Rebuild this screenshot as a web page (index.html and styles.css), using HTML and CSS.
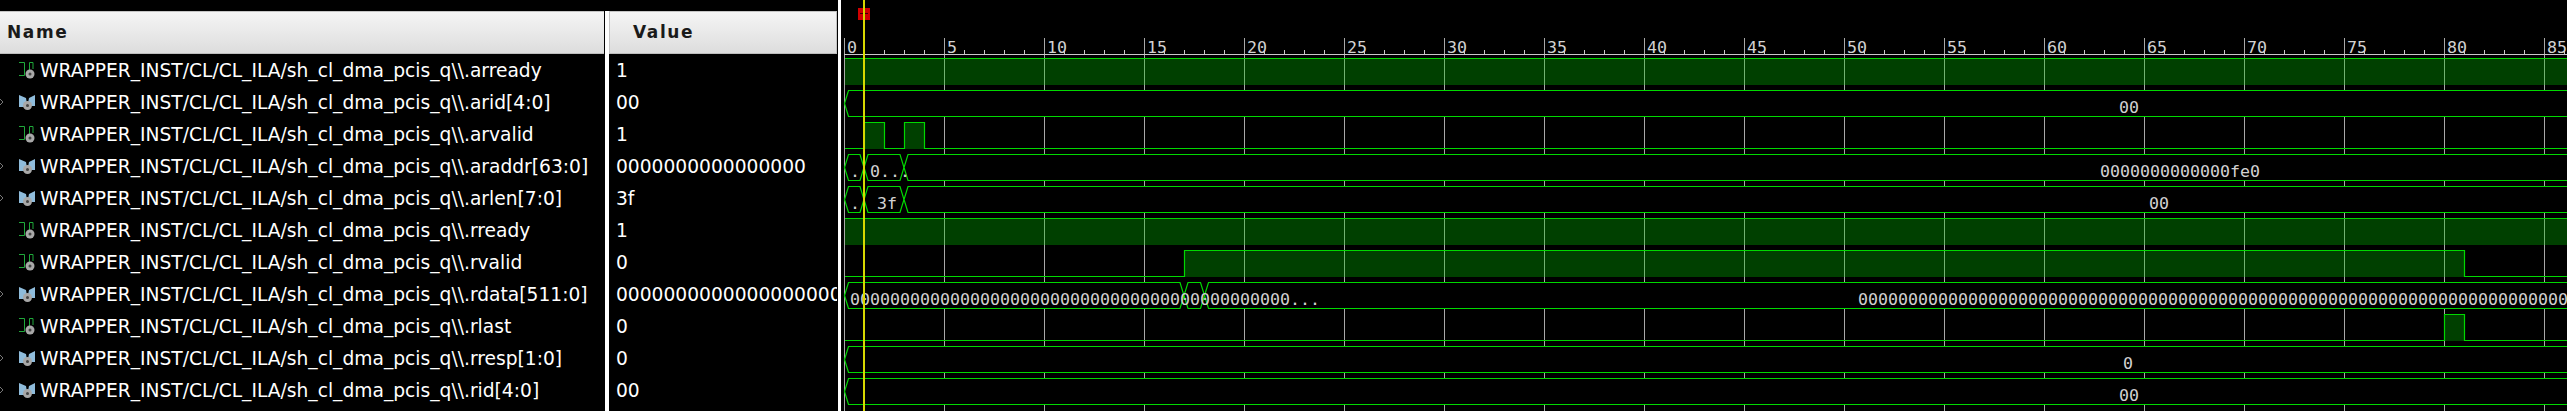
FILE: index.html
```html
<!DOCTYPE html>
<html lang="en">
<head>
<meta charset="UTF-8" />
<title>Waveform</title>
<link rel="stylesheet" href="styles.css">
</head>
<body>
  <svg class="defs" aria-hidden="true">
    <defs>
      <!-- list icons -->
      <g id="ico-bit">
        <path class="ico-wire" d="M19 62.5H24.5V75.5M24.5 75.5H19M29.5 75V62.5H33V69" transform="translate(0,-54)" />
        <circle class="ico-gear" cx="30" cy="20" r="4.5" />
        <circle class="ico-hub" cx="30" cy="20" r="1.5" />
      </g>
      <g id="ico-bus">
        <path class="ico-arrow" d="M0 13L3 16L0 19" />
        <path class="ico-flag" d="M19 9L26 12L27 18L24 21H19ZM35 9L29 12L28 17L31 20H35Z" />
        <circle class="ico-gear" cx="27.5" cy="19.5" r="4.5" />
        <circle class="ico-hub" cx="27.5" cy="19.5" r="1.5" />
      </g>
      <!-- wave shapes, row-relative: top line 0.5, bottom line 26.5 -->
      <path id="bus-full" d="M2580 .5H848.5L844.5 13.5L848.5 26.5H2580" />
      <g id="bus-early">
        <path d="M848.5 .5H860L864 13.5L860 26.5H848.5L844.5 13.5Z" />
        <path d="M868 .5H900L904 13.5L900 26.5H868L864 13.5Z" />
        <path d="M2580 .5H908L904 13.5L908 26.5H2580" />
      </g>
    </defs>
  </svg>

  <div class="names">
    <div class="col-head">Name</div>
    <div class="row"><svg class="ico"><use href="#ico-bit" /></svg>WRAPPER_INST/CL/CL_ILA/sh_cl_dma_pcis_q\\.arready</div>
    <div class="row"><svg class="ico"><use href="#ico-bus" /></svg>WRAPPER_INST/CL/CL_ILA/sh_cl_dma_pcis_q\\.arid[4:0]</div>
    <div class="row"><svg class="ico"><use href="#ico-bit" /></svg>WRAPPER_INST/CL/CL_ILA/sh_cl_dma_pcis_q\\.arvalid</div>
    <div class="row"><svg class="ico"><use href="#ico-bus" /></svg>WRAPPER_INST/CL/CL_ILA/sh_cl_dma_pcis_q\\.araddr[63:0]</div>
    <div class="row"><svg class="ico"><use href="#ico-bus" /></svg>WRAPPER_INST/CL/CL_ILA/sh_cl_dma_pcis_q\\.arlen[7:0]</div>
    <div class="row"><svg class="ico"><use href="#ico-bit" /></svg>WRAPPER_INST/CL/CL_ILA/sh_cl_dma_pcis_q\\.rready</div>
    <div class="row"><svg class="ico"><use href="#ico-bit" /></svg>WRAPPER_INST/CL/CL_ILA/sh_cl_dma_pcis_q\\.rvalid</div>
    <div class="row"><svg class="ico"><use href="#ico-bus" /></svg>WRAPPER_INST/CL/CL_ILA/sh_cl_dma_pcis_q\\.rdata[511:0]</div>
    <div class="row"><svg class="ico"><use href="#ico-bit" /></svg>WRAPPER_INST/CL/CL_ILA/sh_cl_dma_pcis_q\\.rlast</div>
    <div class="row"><svg class="ico"><use href="#ico-bus" /></svg>WRAPPER_INST/CL/CL_ILA/sh_cl_dma_pcis_q\\.rresp[1:0]</div>
    <div class="row"><svg class="ico"><use href="#ico-bus" /></svg>WRAPPER_INST/CL/CL_ILA/sh_cl_dma_pcis_q\\.rid[4:0]</div>
  </div>
  <div class="sash sash-names"></div>

  <div class="values">
    <div class="col-head col-head-value">Value</div>
    <div class="row">1</div>
    <div class="row">00</div>
    <div class="row">1</div>
    <div class="row">0000000000000000</div>
    <div class="row">3f</div>
    <div class="row">1</div>
    <div class="row">0</div>
    <div class="row">00000000000000000000000000000000</div>
    <div class="row">0</div>
    <div class="row">0</div>
    <div class="row">00</div>
  </div>
  <div class="sash sash-values"></div>

  <svg class="wave" viewBox="841 0 1726 411">
    <!-- grid + ruler -->
    <path class="grid" d="M844.5 38V411M944.5 38V411M1044.5 38V411M1144.5 38V411M1244.5 38V411M1344.5 38V411M1444.5 38V411M1544.5 38V411M1644.5 38V411M1744.5 38V411M1844.5 38V411M1944.5 38V411M2044.5 38V411M2144.5 38V411M2244.5 38V411M2344.5 38V411M2444.5 38V411M2544.5 38V411" />
    <path class="ruler" d="M844 54.5H2567" />
    <g class="ruler">
      <path id="minor5" d="M864.5 50V54M884.5 50V54M904.5 50V54M924.5 50V54" />
      <use href="#minor5" x="100" /><use href="#minor5" x="200" /><use href="#minor5" x="300" /><use href="#minor5" x="400" />
      <use href="#minor5" x="500" /><use href="#minor5" x="600" /><use href="#minor5" x="700" /><use href="#minor5" x="800" />
      <use href="#minor5" x="900" /><use href="#minor5" x="1000" /><use href="#minor5" x="1100" /><use href="#minor5" x="1200" />
      <use href="#minor5" x="1300" /><use href="#minor5" x="1400" /><use href="#minor5" x="1500" /><use href="#minor5" x="1600" />
      <use href="#minor5" x="1700" />
    </g>
    <g class="lbl">
      <text x="847" y="53">0</text>
      <text x="947" y="53">5</text>
      <text x="1047" y="53">10</text>
      <text x="1147" y="53">15</text>
      <text x="1247" y="53">20</text>
      <text x="1347" y="53">25</text>
      <text x="1447" y="53">30</text>
      <text x="1547" y="53">35</text>
      <text x="1647" y="53">40</text>
      <text x="1747" y="53">45</text>
      <text x="1847" y="53">50</text>
      <text x="1947" y="53">55</text>
      <text x="2047" y="53">60</text>
      <text x="2147" y="53">65</text>
      <text x="2247" y="53">70</text>
      <text x="2347" y="53">75</text>
      <text x="2447" y="53">80</text>
      <text x="2547" y="53">85</text>
    </g>

    <!-- arready -->
    <g transform="translate(0,58)">
      <rect class="hi" x="845" y="0" width="1722" height="27" />
      <path class="sig" d="M845 .5H2567" />
    </g>
    <!-- arid -->
    <g class="bus" transform="translate(0,90)">
      <use href="#bus-full" />
      <text class="lbl" x="2119" y="23">00</text>
    </g>
    <!-- arvalid -->
    <g transform="translate(0,122)">
      <rect class="hi" x="865" y="0" width="20" height="27" />
      <rect class="hi" x="905" y="0" width="20" height="27" />
      <path class="sig" d="M845 26.5H864.5V.5H884.5V26.5H904.5V.5H924.5V26.5H2567" />
    </g>
    <!-- araddr -->
    <g class="bus" transform="translate(0,154)">
      <use href="#bus-early" />
      <text class="lbl" x="850" y="23">.</text>
      <text class="lbl" x="870" y="23">0...</text>
      <text class="lbl" x="2100" y="23">0000000000000fe0</text>
    </g>
    <!-- arlen -->
    <g class="bus" transform="translate(0,186)">
      <use href="#bus-early" />
      <text class="lbl" x="850" y="23">.</text>
      <text class="lbl" x="877" y="23">3f</text>
      <text class="lbl" x="2149" y="23">00</text>
    </g>
    <!-- rready -->
    <g transform="translate(0,218)">
      <rect class="hi" x="845" y="0" width="1722" height="27" />
      <path class="sig" d="M845 .5H2567" />
    </g>
    <!-- rvalid -->
    <g transform="translate(0,250)">
      <rect class="hi" x="1185" y="0" width="1279" height="27" />
      <path class="sig" d="M845 26.5H1184.5V.5H2464.5V26.5H2567" />
    </g>
    <!-- rdata -->
    <g class="bus" transform="translate(0,282)">
      <path d="M848.5 .5H1180L1184 13.5L1180 26.5H848.5L844.5 13.5Z" />
      <path d="M1188 .5H1200.5L1204.5 13.5L1200.5 26.5H1188L1184 13.5Z" />
      <path d="M2580 .5H1208.5L1204.5 13.5L1208.5 26.5H2580" />
      <text class="lbl" x="850" y="23">00000000000000000000000000000000000000000000...</text>
      <text class="lbl" x="1858" y="23">00000000000000000000000000000000000000000000000000000000000000000000000000</text>
    </g>
    <!-- rlast -->
    <g transform="translate(0,314)">
      <rect class="hi" x="2445" y="0" width="20" height="27" />
      <path class="sig" d="M845 26.5H2444.5V.5H2464.5V26.5H2567" />
    </g>
    <!-- rresp -->
    <g class="bus" transform="translate(0,346)">
      <use href="#bus-full" />
      <text class="lbl" x="2123" y="23">0</text>
    </g>
    <!-- rid -->
    <g class="bus" transform="translate(0,378)">
      <use href="#bus-full" />
      <text class="lbl" x="2119" y="23">00</text>
    </g>

    <!-- cursor + its marker -->
    <rect class="marker" x="858" y="8" width="12" height="12" />
    <path class="marker-cross" d="M860 13.5H868" />
    <rect class="cursor" x="863" y="0" width="2" height="411" />
  </svg>
</body>
</html>
```

FILE: styles.css
```css
/* Reset */
* {
  box-sizing: border-box;
}
body {
  margin: 0;
  background: #000;
  display: flex;
  height: 411px;
  overflow: hidden;
  font-family: "DejaVu Sans", sans-serif;
  color: #fff;
}
.defs {
  position: absolute;
  width: 0;
  height: 0;
}

/* left columns */
.names, .values {
  padding-top: 11px;
  overflow: hidden;
  white-space: nowrap;
}
.names {
  width: 604px;
}
.values {
  width: 228px;
}
.col-head {
  height: 43px;
  padding-left: 7px;
  line-height: 41px;
  font-size: 17px;
  font-weight: bold;
  letter-spacing: 1.6px;
  color: #1a1a1a;
  background: linear-gradient(#f5f5f5, #dddddd);
  border-top: 1px solid #c4c4c4;
  border-bottom: 1px solid #bdbdbd;
}
.col-head-value {
  padding-left: 23px;
  border-left: 1px solid #c4c4c4;
  border-right: 1px solid #c4c4c4;
}
.row {
  display: flex;
  align-items: center;
  height: 32px;
  font-size: 18.67px;
}
.values .row {
  padding-left: 7px;
}
.ico {
  flex: none;
  width: 40px;
  height: 32px;
}
.ico-wire {
  fill: none;
  stroke: #1fa83a;
  stroke-width: 1;
}
.ico-gear {
  fill: #a8a8a8;
}
.ico-hub {
  fill: #444;
}
.ico-flag {
  fill: #8fbcdb;
}
.ico-arrow {
  fill: none;
  stroke: #777;
  stroke-width: 1;
}

.sash {
  flex: none;
  background: #fff;
}
.sash-names {
  width: 4px;
  margin: 11px 0 0 1px;
}
.sash-values {
  width: 3px;
  margin-left: 1px;
}

/* waveform */
.wave {
  flex: none;
  width: 1726px;
  height: 411px;
  background: #000;
}
.grid {
  fill: none;
  stroke: #a8a8a8;
  stroke-width: 1;
}
.ruler {
  fill: none;
  stroke: #c8c8c8;
  stroke-width: 1;
}
.lbl {
  font-family: "DejaVu Sans Mono", monospace;
  font-size: 16.61px;
  fill: #d2d2d2;
}
.hi {
  fill: #00c800;
  fill-opacity: 0.32;
}
.sig {
  fill: none;
  stroke: #00d800;
  stroke-width: 1.2;
}
.bus path, .bus use {
  fill: #000;
  stroke: #00d800;
  stroke-width: 1.2;
}
.marker {
  fill: #d00000;
}
.marker-cross {
  stroke: #400000;
  stroke-width: 1;
}
.cursor {
  fill: #d8d800;
}
```
